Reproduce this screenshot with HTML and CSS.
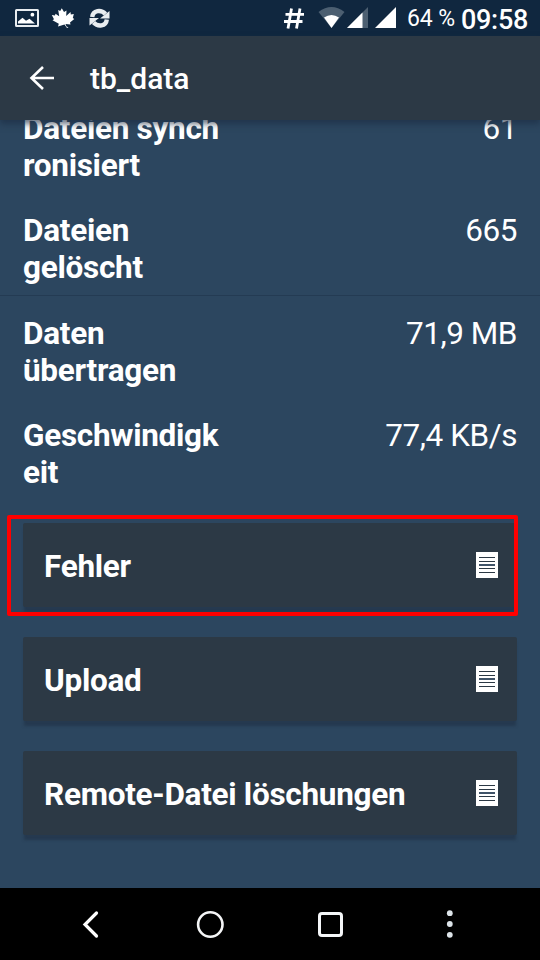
FILE: index.html
```
<!DOCTYPE html>
<html lang="de">
<head>
<meta charset="utf-8">
<title>tb_data</title>
<link rel="stylesheet" href="styles.css">
</head>
<body>
<div class="screen">
  <header class="status">
    <svg class="status-left" width="120" height="36" viewBox="0 0 120 36">
      <rect x="16" y="10" width="22" height="16" rx=".5" fill="none" stroke="#e9edf0" stroke-width="2"/>
      <path d="M18 23.500v-2l4.500-3.800 3.500 3 3.500-2 5.500 4.800z" fill="#fff"/>
      <circle cx="32.400" cy="14.700" r="1.900" fill="#fff"/>
      <path d="M61.800 8.200L64 12l2.500-1.500-.3 5.500 4.300-4 .3 2.500 3-.5-1 4 1.500 1-4.300 3.500.5 2-5-.5 1 2.500 2 .8-1.500.7-2.500-3.500-6.500 2 .8-2.700-6.300-3.500 1.500-1-2.200-4.200 3.200.4.500-1.700 3.700 2.500-1-6.300 2 1z" fill="#fff"/>
      <g fill="none" stroke="#e9edf0" stroke-width="4.400">
        <path d="M92.200 17C93 10 101 9.200 105.500 14"/>
        <path d="M106.800 19.500C106 26.500 98 27.200 93.500 22.500"/>
      </g>
      <path d="M109.500 11v7.500H100zM89.500 25.500V18H99z" fill="#e9edf0"/>
    </svg>
    <div class="status-right">
      <svg width="122" height="36" viewBox="0 0 122 36">
        <path d="M21.500 8.500l-3.500 20M30 8.500l-3.500 20M15.500 14.300H34M14 21.500H32.500" fill="none" stroke="#fff" stroke-width="2.800"/>
        <path d="M48.500 12Q61.500 2 74.500 12L61.500 28z" fill="#4c5f71"/>
        <path d="M54 17.500Q61.500 12.500 69 17.500L61.500 28z" fill="#fff"/>
        <path d="M77 28L98 7v21z" fill="#4c5f71"/>
        <path d="M77 28l15.500-15.500V28z" fill="#fff"/>
        <path d="M105 28L126 7v21z" fill="#fff"/>
      </svg>
      <span class="battery">64 %</span>
      <span class="clock">09:58</span>
    </div>
  </header>
  <div class="appbar">
    <svg width="26" height="26" viewBox="0 0 26 26"><path d="M14 2L2.500 13 14 24M2.500 13H25" fill="none" stroke="#fff" stroke-width="2.600"/></svg>
    <h1>tb_data</h1>
  </div>
  <main class="content">
    <div class="stats">
      <div class="row"><b>Dateien synch<br>ronisiert</b><span>61</span></div>
      <div class="row"><b>Dateien<br>gelöscht</b><span>665</span></div>
    </div>
    <div class="stats">
      <div class="row"><b>Daten<br>übertragen</b><span>71,9 MB</span></div>
      <div class="row"><b>Geschwindigk<br>eit</b><span>77,4 KB/s</span></div>
    </div>
    <div class="cards">
      <div class="card"><b>Fehler</b><i class="doc"></i></div>
      <div class="card"><b>Upload</b><i class="doc"></i></div>
      <div class="card"><b>Remote-Datei löschungen</b><i class="doc"></i></div>
      <div class="highlight"></div>
    </div>
  </main>
  <nav class="nav">
    <svg width="30" height="32" viewBox="0 0 30 32"><path d="M21.500 5L10 16.500 21.500 28" fill="none" stroke="#fff" stroke-width="3.200" stroke-linecap="round"/></svg>
    <svg width="30" height="32" viewBox="0 0 30 32"><circle cx="15.300" cy="16.500" r="12.200" fill="none" stroke="#f4f5f6" stroke-width="2.600"/></svg>
    <svg width="30" height="32" viewBox="0 0 30 32"><rect x="4.500" y="5.500" width="22" height="22" rx="2.500" fill="none" stroke="#f4f6f8" stroke-width="3"/></svg>
    <svg width="30" height="32" viewBox="0 0 30 32"><g fill="#dde4e9"><circle cx="14.800" cy="5.200" r="2.900"/><circle cx="14.800" cy="16" r="2.900"/><circle cx="14.800" cy="26.800" r="2.900"/></g></svg>
  </nav>
</div>
</body>
</html>
```
FILE: styles.css
```
* { box-sizing: border-box; }
body { margin: 0; background: #000; color: #fff; font-family: Roboto, "Liberation Sans", sans-serif; }
svg { display: block; flex: none; }
.screen { width: 540px; height: 960px; display: flex; flex-direction: column; overflow: hidden; background: #2c465f; }
.status { flex: none; height: 36px; background: #10273f; display: flex; justify-content: space-between; }
.status-right { display: flex; width: 270px; white-space: nowrap; }
.status-right svg { overflow: visible; }
.battery { width: 69px; padding-left: 15px; font-size: 23px; line-height: 38px; letter-spacing: -.1px; }
.clock { font-size: 27px; font-weight: 500; line-height: 40px; letter-spacing: -.3px; }
.appbar { flex: none; height: 84px; padding-left: 29px; display: flex; align-items: center; gap: 35px; background: #2c3945; position: relative; z-index: 1; box-shadow: 0 4px 6px rgba(28, 45, 68, .65); }
h1 { margin: 2px 0 0; font-size: 30px; font-weight: 500; line-height: 36px; }
.content { flex: none; height: 768px; overflow: hidden; font-size: 31.5px; line-height: 37px; }
.stats { display: flex; flex-direction: column; gap: 28px; padding: 20px 23px 9px; }
.stats:first-child { margin-top: -10px; padding-top: 0; border-bottom: 1px solid #243b53; }
.stats:nth-child(2) { padding-top: 19px; }
.row { display: flex; justify-content: space-between; height: 74px; }
b { letter-spacing: -.28px; }
.row span { letter-spacing: -.45px; }
.cards { display: flex; flex-direction: column; gap: 30px; padding: 23px 23px 0; position: relative; }
.card { height: 84px; display: flex; align-items: center; justify-content: space-between; padding: 2px 19px 0 21px; background: #2c3945; border-radius: 2px; box-shadow: 0 6px 3px -1px #25394f; }
.doc { width: 22px; height: 26px; background: linear-gradient(#2c3945 0 0) 3px 5px / 16px 1px, linear-gradient(#2c3945 0 0) 3px 9px / 16px 1px, linear-gradient(#3f5368 0 0) 3px 12px / 16px 2px, linear-gradient(#2c3945 0 0) 3px 16px / 16px 1px, linear-gradient(#2c3945 0 0) 3px 20px / 16px 1px, #fff; background-repeat: no-repeat; margin-top: -2px; }
.highlight { position: absolute; left: 7px; top: 15px; width: 511px; height: 101px; border: 4px solid #f00; border-radius: 2px; }
.nav { flex: none; height: 72px; background: #000; display: flex; align-items: center; gap: 90px; padding-left: 75px; }
```
